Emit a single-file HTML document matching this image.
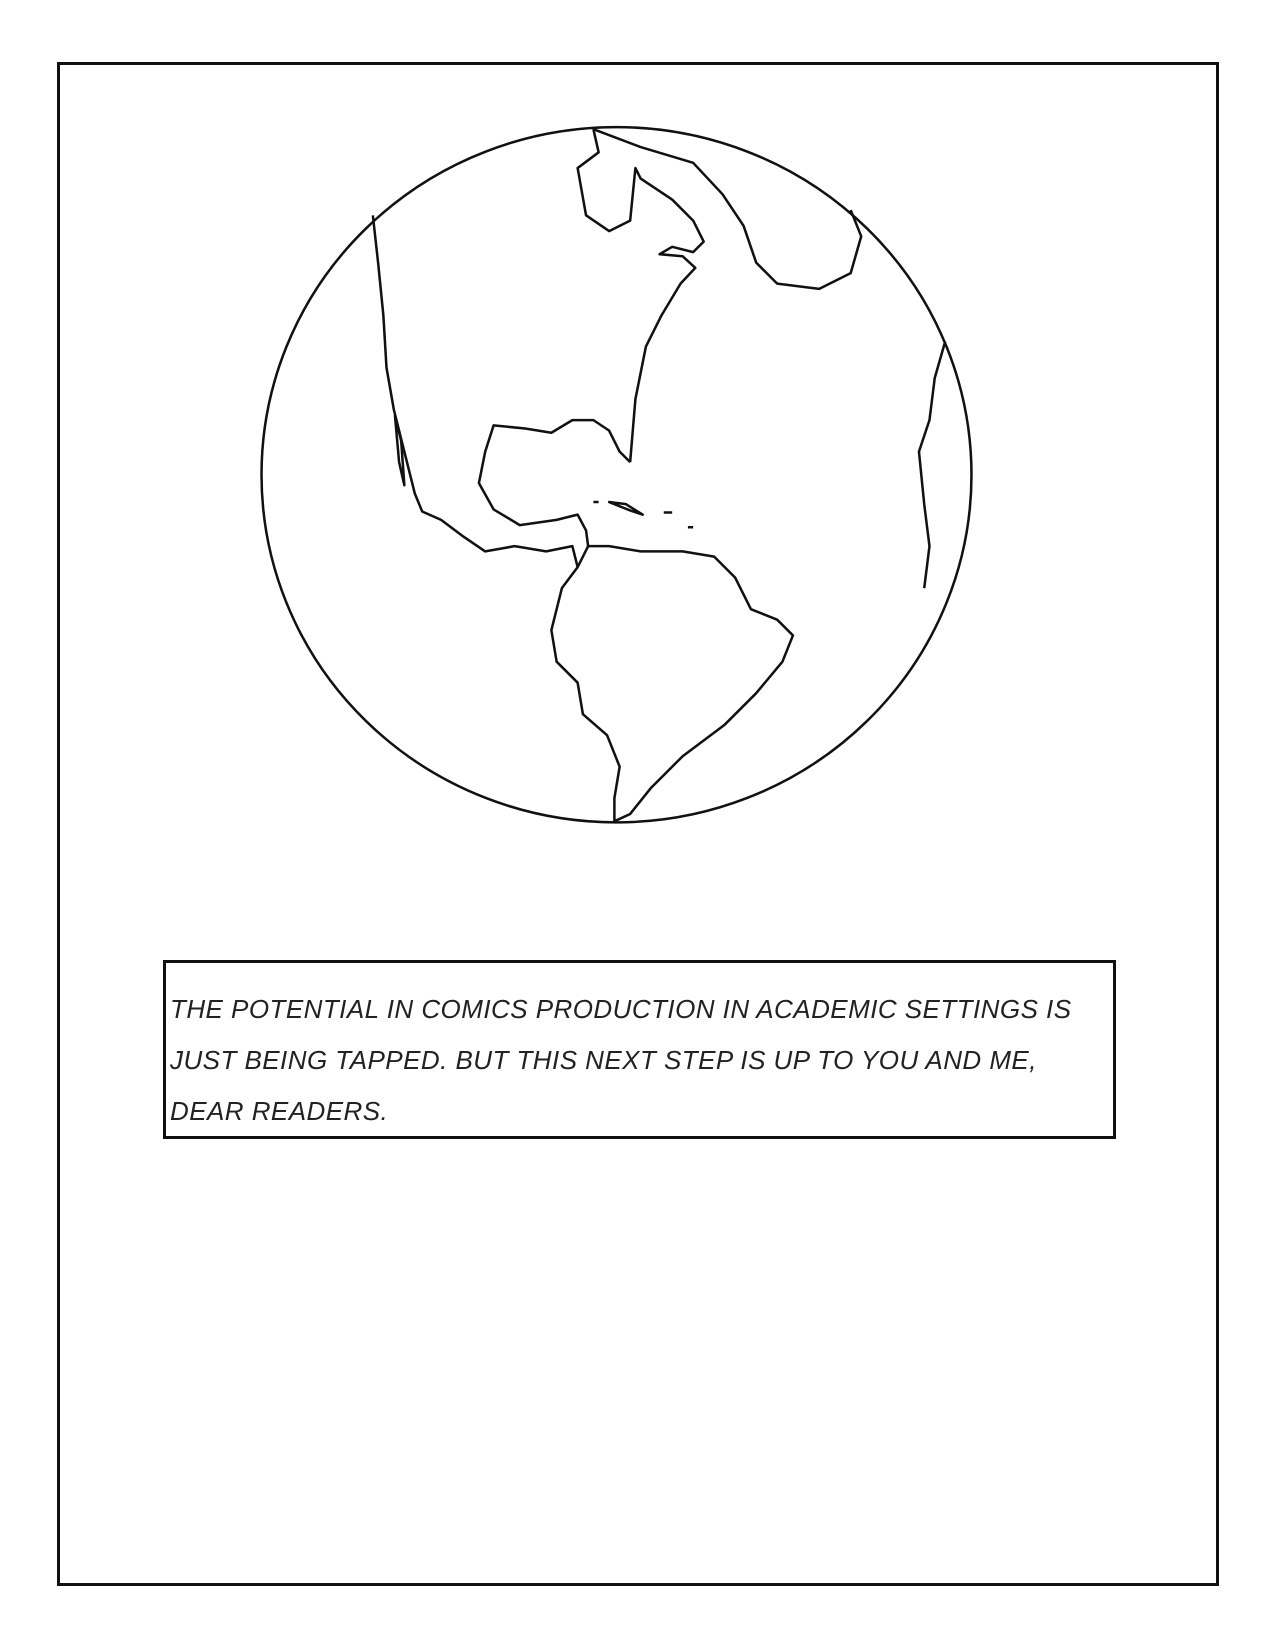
<!DOCTYPE html>
<html><head><meta charset="utf-8"><style>
html,body{margin:0;padding:0;background:#fff;}
body{width:1275px;height:1650px;position:relative;overflow:hidden;}
.frame{position:absolute;left:57px;top:62px;width:1156px;height:1518px;border:3px solid #111;}
.box{position:absolute;left:163px;top:960px;width:947px;height:173px;border:3px solid #111;}
.txt{position:absolute;left:170px;top:984px;font-family:"Liberation Sans",sans-serif;font-style:italic;font-size:26px;line-height:51px;color:#222;letter-spacing:0.45px;text-transform:uppercase;white-space:nowrap;}
svg{position:absolute;left:0;top:0;}
</style></head><body>
<div class="frame"></div>
<svg width="1275" height="1650" viewBox="0 0 1214 1571" fill="none" stroke="#111" stroke-width="2.4" stroke-linejoin="round">
<ellipse cx="587" cy="452" rx="338" ry="331"/>
<path d="M355 205 L360 250 365 300 368 350 375 390 385 430 395 470 402 487 420 495 440 510 462 525 490 520 520 525 545 520 550 540"/>
<path d="M600 440 L605 380 615 330 630 300 648 270 662 255 650 244 628 242 640 235 660 240 670 230 660 210 640 190 610 170 605 160 600 210 580 220 558 205 550 160 570 145 565 123"/>
<path d="M600 440 L590 430 580 410 565 400 545 400 525 412 500 408 470 405 462 430 456 460 470 485 495 500 530 495 550 490 558 505 560 520"/>
<path d="M550 540 L535 560 525 600 530 630 550 650 555 680 578 700 590 730 585 760 585 782 600 775 620 750 650 720 690 690 720 660 745 630 755 605 740 590 715 580 700 550 680 530 650 525 610 525 580 520 560 520 550 540"/>
<path d="M565 123 L610 140 660 155 688 185 708 215 720 250 740 270 780 275 810 260 820 225 810 200"/>
<path d="M900 325 L890 360 885 400 875 430 880 480 885 520 880 560"/>
<path d="M376 395 L380 440 385 462 382 420 376 395"/>
<path d="M580 478 L600 486 612 490 596 480 Z M565 478 h5 M632 488 h8 M655 502 h5"/>
</svg>
<div class="box"></div>
<div class="txt">The potential in comics production in academic settings is<br>just being tapped. But this next step is up to you and me,<br>dear readers.</div>
</body></html>
